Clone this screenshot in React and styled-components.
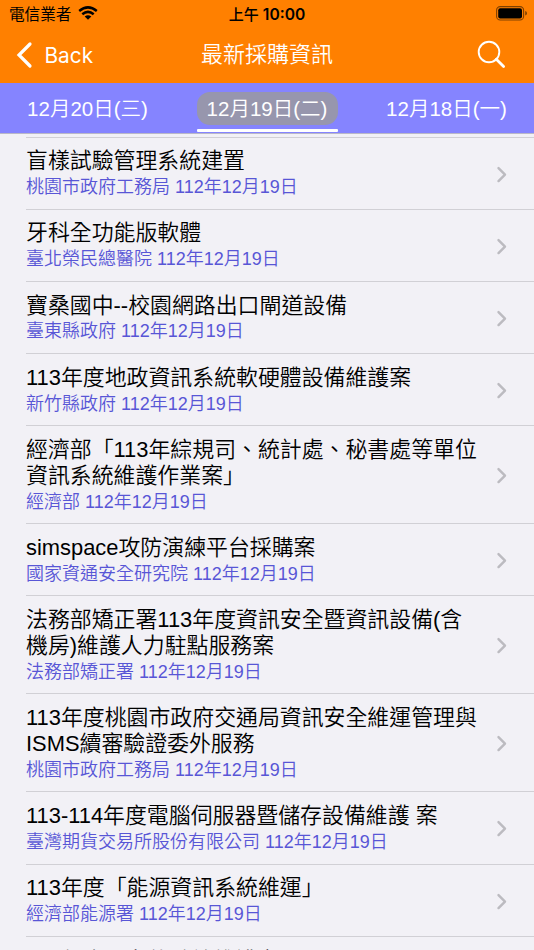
import React, { useState } from "react";
import styled, { createGlobalStyle } from "styled-components";

const dates = ["12月20日(三)", "12月19日(二)", "12月18日(一)"];

const tenders = [
  { lines: ["盲樣試驗管理系統建置"], agency: "桃園市政府工務局" },
  { lines: ["牙科全功能版軟體"], agency: "臺北榮民總醫院" },
  { lines: ["寶桑國中--校園網路出口閘道設備"], agency: "臺東縣政府" },
  { lines: ["113年度地政資訊系統軟硬體設備維護案"], agency: "新竹縣政府" },
  {
    lines: ["經濟部「113年綜規司、統計處、秘書處等單位", "資訊系統維護作業案」"],
    agency: "經濟部",
  },
  { lines: ["simspace攻防演練平台採購案"], agency: "國家資通安全研究院" },
  {
    lines: ["法務部矯正署113年度資訊安全暨資訊設備(含", "機房)維護人力駐點服務案"],
    agency: "法務部矯正署",
  },
  {
    lines: ["113年度桃園市政府交通局資訊安全維運管理與", "ISMS續審驗證委外服務"],
    agency: "桃園市政府工務局",
  },
  {
    lines: ["113-114年度電腦伺服器暨儲存設備維護 案"],
    agency: "臺灣期貨交易所股份有限公司",
  },
  { lines: ["113年度「能源資訊系統維運」"], agency: "經濟部能源署" },
  { lines: ["113年度AI文件系統維護案"], agency: "經濟部" },
];

function App() {
  const [selected, setSelected] = useState(1);

  return (
    <Screen>
      <GlobalStyle />
      <Header>
        <StatusBar>
          <Carrier>
            電信業者
            <WifiIcon />
          </Carrier>
          <Clock>
            上午 <b>10:00</b>
          </Clock>
          <BatteryIcon />
        </StatusBar>
        <NavBar>
          <BackButton>
            <svg width="18" height="28" viewBox="0 0 18 28">
              <path d="M15 3 L4 14 L15 25" />
            </svg>
            Back
          </BackButton>
          <NavTitle>最新採購資訊</NavTitle>
          <SearchButton aria-label="Search">
            <svg width="30" height="30" viewBox="0 0 30 30">
              <circle cx="12" cy="12" r="10.3" strokeWidth="1.9" />
              <path d="M19.3 19.3 L26.6 26.6" strokeWidth="2.8" />
            </svg>
          </SearchButton>
        </NavBar>
      </Header>

      <DateTabs>
        {dates.map((date, index) => (
          <DateTab
            key={date}
            $active={index === selected}
            onClick={() => setSelected(index)}
          >
            <DateLabel $active={index === selected}>{date}</DateLabel>
            <Underline $active={index === selected} />
          </DateTab>
        ))}
      </DateTabs>

      <List>
        {tenders.map((tender) => (
          <Row key={tender.lines[0]}>
            <RowText>
              {tender.lines.map((line) => (
                <RowTitle key={line}>{line}</RowTitle>
              ))}
              <RowDetail>{tender.agency} 112年12月19日</RowDetail>
            </RowText>
            <Chevron />
          </Row>
        ))}
      </List>
    </Screen>
  );
}

export default App;

function WifiIcon() {
  return (
    <svg width="20" height="14" viewBox="0 0 20 14">
      <g fill="none" stroke="#000" strokeWidth="2.5">
        <path d="M1.2 4.9 Q10 -2.1 18.8 4.9" />
        <path d="M4.3 8.2 Q10 3.6 15.7 8.2" />
      </g>
      <path d="M6.7 10.5 Q10 7.9 13.3 10.5 L10 13.8 Z" />
    </svg>
  );
}

function BatteryIcon() {
  return (
    <svg width="32" height="15" viewBox="0 0 32 15">
      <rect x="0.6" y="0.6" width="27" height="13.4" rx="3.6" fill="none" stroke="#000" strokeOpacity="0.5" strokeWidth="1.1" />
      <rect x="2.2" y="2.2" width="23.8" height="10.2" rx="2" />
      <path d="M29.2 5 Q31 5.6 31 7.3 Q31 9 29.2 9.6 Z" fillOpacity="0.5" />
    </svg>
  );
}

function Chevron() {
  return (
    <ChevronIcon width="12" height="18" viewBox="0 0 12 18">
      <path d="M2.5 2.1 L9 8.6 L2.5 15.1" />
    </ChevronIcon>
  );
}

const GlobalStyle = createGlobalStyle`
  * {
    box-sizing: border-box;
  }

  body {
    margin: 0;
    font-family: "Liberation Sans", "Noto Sans CJK TC", sans-serif;
    font-weight: 350;
  }

  button {
    padding: 0;
    border: 0;
    background: none;
    font: inherit;
    color: inherit;
    cursor: pointer;
  }
`;

const Screen = styled.div`
  display: flex;
  flex-direction: column;
  height: 950px;
  overflow: hidden;
  background: #f2f1f6;
`;

const Header = styled.header`
  flex: none;
  height: 83px;
  background: #ff8000;
`;

const StatusBar = styled.div`
  display: grid;
  grid-template-columns: 1fr auto 1fr;
  align-items: center;
  height: 27px;
  padding: 0 6px 0 9px;

  > svg {
    justify-self: end;
  }
`;

const Carrier = styled.div`
  display: flex;
  align-items: center;
  gap: 7px;
  height: 23px;
  margin-bottom: 2px;
  font-size: 15.6px;
  font-weight: 400;
`;

const Clock = styled.div`
  height: 23px;
  margin: 1px 3px 0 0;
  font-family: Inter, "Noto Sans CJK TC", sans-serif;
  font-size: 15px;
  font-weight: 500;
  line-height: 23px;
  white-space: nowrap;

  b {
    font-size: 15.6px;
    font-weight: 600;
  }
`;

const NavBar = styled.nav`
  display: grid;
  grid-template-columns: 1fr auto 1fr;
  align-items: center;
  height: 56px;
  padding: 0 27px 0 15px;
  color: #fff;

  svg {
    fill: none;
    stroke: #fff;
    stroke-linecap: round;
  }
`;

const BackButton = styled.button`
  display: flex;
  align-items: center;
  justify-self: start;
  gap: 11.5px;
  font-family: Inter, sans-serif;
  font-size: 20.8px;
  font-weight: 400;

  svg {
    stroke-width: 3.2;
  }
`;

const NavTitle = styled.h1`
  margin: 0 -6px 0 6px;
  font-size: 22px;
  font-weight: 350;
  line-height: 30px;
`;

const SearchButton = styled.button`
  justify-self: end;
  display: flex;
`;

const DateTabs = styled.div`
  flex: none;
  display: flex;
  justify-content: space-between;
  height: 51px;
  padding: 9px 17px 0;
  border-bottom: 1px solid #b9b8c8;
  background: #8584ff;
`;

const DateTab = styled.button`
  display: flex;
  flex-direction: column;
  justify-content: space-between;
  width: 141px;
  height: 40px;
  font-size: 20.5px;
  line-height: 33px;
  color: #fff;
`;

const DateLabel = styled.span`
  width: 100%;
  height: 33px;
  border-radius: 13px;
  background: ${(props) => (props.$active ? "#9796ad" : "none")};
  white-space: nowrap;
`;

const Underline = styled.span`
  width: 100%;
  height: 3px;
  border-radius: 1px;
  background: ${(props) => (props.$active ? "#fff" : "none")};
`;

const List = styled.ul`
  flex: 1;
  min-height: 0;
  margin: 0;
  padding: 2.5px 0 0 26px;
  list-style: none;
  overflow: hidden;
`;

const Row = styled.li`
  display: flex;
  align-items: center;
  justify-content: space-between;
  padding: 10.8px 26px 7.9px 0;
  border-top: 1px solid #d1d0d5;
`;

const RowText = styled.div`
  white-space: nowrap;
`;

const RowTitle = styled.div`
  font-size: 21.9px;
  line-height: 25.8px;
  color: #000;
`;

const RowDetail = styled.div`
  padding-top: 1px;
  font-size: 18px;
  line-height: 25.7px;
  color: #5856d6;
`;

const ChevronIcon = styled.svg`
  flex: none;
  fill: none;
  stroke: #bcbbc0;
  stroke-width: 2.4;
  stroke-linecap: round;
  stroke-linejoin: round;
`;
